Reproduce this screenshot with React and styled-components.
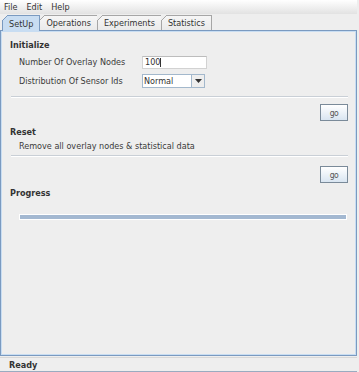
import styled, { createGlobalStyle } from "styled-components";

const Global = createGlobalStyle`
  html, body {
    margin: 0;
    padding: 0;
    background: #eeeeee;
  }
  body {
    font-family: "DejaVu Sans", "Liberation Sans", sans-serif;
    font-stretch: condensed;
    font-size: 9px;
    color: #3a3a3a;
  }
`;

const tabs = ["SetUp", "Operations", "Experiments", "Statistics"];

export default function App() {
  return (
    <>
      <Global />
      <Frame>
        <MenuBar>
          <span>File</span>
          <span>Edit</span>
          <span>Help</span>
        </MenuBar>
        <TabStrip>
          {tabs.map((t, i) => (
            <Tab key={t} selected={i === 0}>
              {t}
            </Tab>
          ))}
        </TabStrip>
        <Panel>
          <Section>
            <Title>Initialize</Title>
            <FormRow gap={4}>
              <Label>Number Of Overlay Nodes</Label>
              <TextField>100<Caret /></TextField>
            </FormRow>
            <FormRow gap={5}>
              <Label>Distribution Of Sensor Ids</Label>
              <Combo>
                <span className="value">Normal</span>
                <span className="arrow">
                  <svg width="7" height="4" viewBox="0 0 7 4">
                    <path d="M0 0h7L3.5 4z" fill="#333" />
                  </svg>
                </span>
              </Combo>
            </FormRow>
          </Section>
          <Separator top={8} />
          <ButtonRow top={6} bottom={5}>
            <GoButton>go</GoButton>
          </ButtonRow>
          <Section>
            <Title>Reset</Title>
            <Note>Remove all overlay nodes &amp; statistical data</Note>
          </Section>
          <Separator top={3} />
          <ButtonRow top={9} bottom={4}>
            <GoButton>go</GoButton>
          </ButtonRow>
          <Section>
            <Title>Progress</Title>
          </Section>
          <ProgressBar>
            <ProgressFill />
          </ProgressBar>
        </Panel>
        <StatusBar>Ready</StatusBar>
      </Frame>
    </>
  );
}

const Frame = styled.div`
  width: 357px;
  height: 372px;
  display: flex;
  flex-direction: column;
  background: #eeeeee;
`;

const MenuBar = styled.div`
  height: 14px;
  display: flex;
  align-items: center;
  gap: 9px;
  padding-left: 4px;
  background: linear-gradient(#ffffff, #e2e2e2);
  color: #333;
`;

const TabStrip = styled.div`
  height: 16px;
  display: flex;
  align-items: flex-end;
  padding-left: 2px;
  background: #eeeeee;
`;

const Tab = styled.div`
  position: relative;
  height: 14px;
  display: flex;
  align-items: center;
  padding: 0 6px 0 7px;
  margin-right: -1px;
  border-top: 1px solid ${(p) => (p.selected ? "#7a9ac0" : "#a6a6a6")};
  border-right: 1px solid ${(p) => (p.selected ? "#7a9ac0" : "#a6a6a6")};
  background: ${(p) =>
    p.selected ? "#c8ddf2" : "linear-gradient(#f6f6f6, #eaeaea)"};
  color: #333;
  z-index: ${(p) => (p.selected ? 2 : 1)};
  ${(p) => (p.selected ? "margin-bottom: -1px; height: 15px;" : "")}

  &::before {
    content: "";
    position: absolute;
    left: 0;
    top: 5px;
    bottom: 0;
    border-left: 1px solid ${(p) => (p.selected ? "#7a9ac0" : "#a6a6a6")};
  }
  &::after {
    content: "";
    position: absolute;
    left: 0;
    top: -1px;
    width: 6px;
    height: 6px;
    background: linear-gradient(
      to bottom right,
      #eeeeee 48%,
      ${(p) => (p.selected ? "#7a9ac0" : "#a6a6a6")} 50%,
      transparent 58%
    );
  }
`;

const Panel = styled.div`
  flex: 1;
  display: flex;
  flex-direction: column;
  border: 1px solid #7a9ac0;
  box-shadow: inset 0 0 0 1px #c8ddf2;
  padding: 8px 8px 0 9px;
`;

const Section = styled.div`
  display: flex;
  flex-direction: column;
`;

const Title = styled.div`
  font-weight: bold;
  line-height: 12px;
  color: #333;
`;

const FormRow = styled.div`
  display: flex;
  align-items: center;
  height: 14px;
  margin-top: ${(p) => p.gap}px;
  padding-left: 9px;
`;

const Label = styled.div`
  width: 123px;
`;

const TextField = styled.div`
  width: 61px;
  height: 11px;
  display: flex;
  align-items: center;
  padding-left: 2px;
  background: #ffffff;
  border: 1px solid #d2d2d2;
  border-top-color: #bcbcbc;
  color: #333;
`;

const Caret = styled.span`
  width: 1px;
  height: 9px;
  background: #333;
`;

const Combo = styled.div`
  width: 61px;
  height: 12px;
  display: flex;
  background: #ffffff;
  border: 1px solid #a3b8cc;

  .value {
    flex: 1;
    display: flex;
    align-items: center;
    padding-left: 1px;
    color: #333;
  }
  .arrow {
    width: 12px;
    display: flex;
    align-items: center;
    justify-content: center;
    border-left: 1px solid #a3b8cc;
    background: #eeeeee;
  }
`;

const Separator = styled.div`
  height: 1px;
  margin: ${(p) => p.top}px 0 0 1px;
  background: #c9cfd6;
  border-bottom: 1px solid #ffffff;
`;

const ButtonRow = styled.div`
  display: flex;
  justify-content: flex-end;
  padding-top: ${(p) => p.top}px;
  margin-bottom: ${(p) => p.bottom}px;
`;

const GoButton = styled.div`
  box-sizing: border-box;
  width: 28px;
  height: 17px;
  display: flex;
  align-items: center;
  justify-content: center;
  border: 1px solid #7a8a99;
  background: linear-gradient(#ffffff, #d9e5f1);
  color: #555;
  font-size: 8.5px;
  letter-spacing: -0.5px;
`;

const Note = styled.div`
  margin: 2px 0 0 9px;
  line-height: 12px;
`;

const ProgressBar = styled.div`
  height: 4px;
  margin: 15px 1px 0 9px;
  border: 1px solid #ffffff;
  background: #eeeeee;
  display: flex;
`;

const ProgressFill = styled.div`
  flex: 1;
  background: #a3b8d1;
`;

const StatusBar = styled.div`
  height: 13px;
  margin-top: 1px;
  display: flex;
  align-items: center;
  padding-left: 9px;
  border-top: 1px solid #d8d8d8;
  border-bottom: 1px solid #9aabc0;
  font-weight: bold;
  color: #333;
`;
